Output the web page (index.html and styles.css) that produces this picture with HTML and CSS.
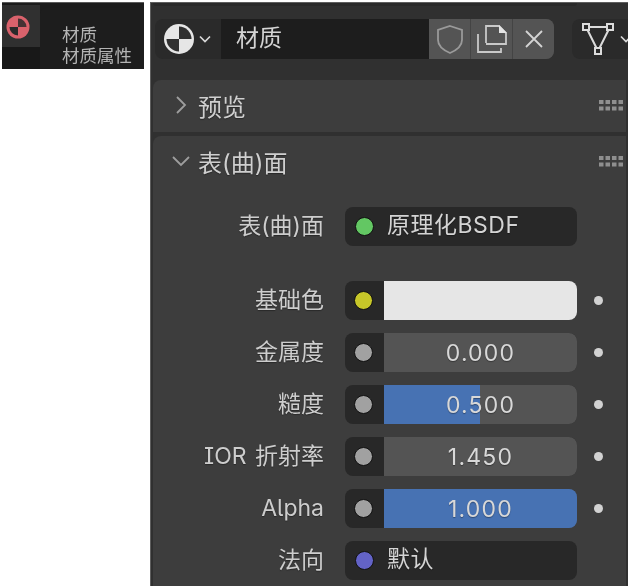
FILE: index.html
```html
<!DOCTYPE html>
<html lang="zh">
<head>
<meta charset="utf-8">
<title>材质</title>
<link rel="stylesheet" href="styles.css">
</head>
<body>
<div class="page">
  <aside class="tip">
    <div class="tabs">
      <div class="tab">
        <svg class="tab-icon" viewBox="0 0 24 24"><circle cx="12" cy="12" r="11.500" fill="#d9626c"/><path d="M12 3.500a8.500 8.500 0 0 1 8.500 8.500H12z" fill="#2a2a2a" opacity=".85"/><path d="M12 12v8.500A8.500 8.500 0 0 1 3.500 12z" fill="#2a2a2a"/></svg>
      </div>
      <div class="tab-rest"></div>
    </div>
    <div class="tip-card">
      <div>材质</div>
      <div>材质属性</div>
    </div>
  </aside>
  <main class="panel">
    <div class="top-edge"></div>
    <div class="toolbar">
      <div class="mat-picker">
        <svg class="mat-icon" viewBox="0 0 32 32"><circle cx="16" cy="16" r="15" fill="#e6e6e6"/><path d="M16 3.500A12.500 12.500 0 0 1 28.500 16H16z" fill="#303030"/><path d="M16 16v12.500A12.500 12.500 0 0 1 3.500 16z" fill="#303030"/></svg>
        <svg class="chev-small" viewBox="0 0 14 10"><path d="M2 2.500l5 5 5-5" fill="none" stroke="#d8d8d8" stroke-width="1.700"/></svg>
      </div>
      <div class="mat-name">材质</div>
      <div class="btn-group">
        <div class="btn"><svg viewBox="0 0 30 32" width="30" height="32"><path d="M15 3l12 4v10c0 6-5 10-12 13C8 27 3 23 3 17V7z" fill="none" stroke="#9a9a9a" stroke-width="1.800"/></svg></div>
        <div class="btn"><svg viewBox="0 0 32 32" width="32" height="32"><path d="M10 20V3h13l7 7v11H10M2 11v18h23v-4" fill="none" stroke="#c9c9c9" stroke-width="1.800"/><path d="M23 2l8 8h-8z" fill="#e4e4e4"/></svg></div>
        <div class="btn"><svg viewBox="0 0 24 24" width="24" height="24"><path d="M4 4l16 16M20 4L4 20" fill="none" stroke="#d4d4d4" stroke-width="1.800"/></svg></div>
      </div>
      <div class="link-btn">
        <svg viewBox="0 0 36 36" width="36" height="36"><path d="M6 6h24M6 6l12 24M30 6L18 30" fill="none" stroke="#dcdcdc" stroke-width="2"/><path d="M3 3h6v6H3zM27 3h6v6h-6zM15 27h6v6h-6z" fill="#2a2a2a" stroke="#dcdcdc" stroke-width="2"/></svg>
        <svg class="chev-small" viewBox="0 0 14 10"><path d="M2 2.500l5 5 5-5" fill="none" stroke="#d8d8d8" stroke-width="1.700"/></svg>
      </div>
    </div>

    <section class="section head-only">
      <svg class="chev-big" viewBox="0 0 20 20"><path d="M6 2l8 8-8 8" fill="none" stroke="#9e9e9e" stroke-width="1.800"/></svg>
      <span class="section-title">预览</span>
      <svg class="grip" viewBox="0 0 25 11"><path d="M0 0h4.500v4H0zM6.500 0h4.500v4H6.500zM13 0h4.500v4H13zM19.500 0H24v4h-4.500zM0 6.500h4.500v4H0zM6.500 6.500h4.500v4H6.500zM13 6.500h4.500v4H13zM19.500 6.500H24v4h-4.500z" fill="#8f8f8f"/></svg>
    </section>

    <section class="section body">
      <div class="section-head">
        <svg class="chev-big" viewBox="0 0 20 20"><path d="M2 6l8 8 8-8" fill="none" stroke="#9e9e9e" stroke-width="1.800"/></svg>
        <span class="section-title">表(曲)面</span>
        <svg class="grip" viewBox="0 0 25 11"><path d="M0 0h4.500v4H0zM6.500 0h4.500v4H6.500zM13 0h4.500v4H13zM19.500 0H24v4h-4.500zM0 6.500h4.500v4H0zM6.500 6.500h4.500v4H6.500zM13 6.500h4.500v4H13zM19.500 6.500H24v4h-4.500z" fill="#8f8f8f"/></svg>
      </div>

      <div class="row surface">
        <label>表(曲)面</label>
        <div class="field dark"><i class="sock green"></i><span class="field-text">原理化BSDF</span></div>
      </div>
      <div class="row">
        <label>基础色</label>
        <div class="field"><span class="sock-cell"><i class="sock yellow"></i></span><span class="swatch"></span></div>
        <i class="dot"></i>
      </div>
      <div class="row">
        <label>金属度</label>
        <div class="field"><span class="sock-cell"><i class="sock grey"></i></span><span class="slider"><span class="value">0.000</span></span></div>
        <i class="dot"></i>
      </div>
      <div class="row">
        <label>糙度</label>
        <div class="field"><span class="sock-cell"><i class="sock grey"></i></span><span class="slider"><span class="fill" style="width:49.500%"></span><span class="value">0.500</span></span></div>
        <i class="dot"></i>
      </div>
      <div class="row">
        <label>IOR 折射率</label>
        <div class="field"><span class="sock-cell"><i class="sock grey"></i></span><span class="slider"><span class="value">1.450</span></span></div>
        <i class="dot"></i>
      </div>
      <div class="row">
        <label>Alpha</label>
        <div class="field"><span class="sock-cell"><i class="sock grey"></i></span><span class="slider"><span class="fill" style="width:100%"></span><span class="value">1.000</span></span></div>
        <i class="dot"></i>
      </div>
      <div class="row">
        <label>法向</label>
        <div class="field dark"><i class="sock violet"></i><span class="field-text">默认</span></div>
      </div>
    </section>
  </main>
</div>
</body>
</html>
```
FILE: styles.css
```css
* { box-sizing: border-box; }
html, body { margin: 0; background: #fff; }
body {
  width: 628px;
  height: 588px;
  overflow: hidden;
  font-family: Inter, "Noto Sans CJK SC", sans-serif;
  font-feature-settings: "ss02";
  color: #d6d6d6;
}
.page {
  display: flex;
  align-items: flex-start;
  gap: 6px;
  padding: 2px 0 0 2px;
  filter: blur(0.5px);
}

/* tooltip crop */
.tip {
  width: 142px;
  height: 67px;
  flex: none;
  display: flex;
  background: #1c1c1c;
  border-top: 1px solid #5a5a5a;
  overflow: hidden;
}
.tabs { width: 38px; flex: none; display: flex; flex-direction: column; }
.tab {
  height: 42px;
  margin-top: 2px;
  background: #303030;
  display: flex;
  align-items: flex-start;
  padding: 10px 0 0 4px;
}
.tab-icon { width: 24px; height: 24px; }
.tab-rest { flex: 1; background: #181818; }
.tip-card {
  flex: 1;
  margin-top: 5px;
  background: #1d1d1d;
  border-radius: 6px 0 0 0;
  padding: 16px 0 0 22px;
  font-size: 17.500px;
  line-height: 21px;
  color: #b4b4b4;
}

/* properties panel */
.panel {
  width: 478px;
  height: 584px;
  flex: none;
  background: #303030;
  padding: 0 2px 0 2px;
  overflow: hidden;
  border-left: 1px solid #5e5e5e;
  border-top: 1px solid #5e5e5e;
}
.top-edge {
  height: 3px;
  width: 424px;
  background: #2a2a2a;
  border-radius: 0 0 6px 6px;
}
.toolbar {
  display: flex;
  align-items: stretch;
  height: 40px;
  margin-top: 13px;
  padding-left: 2px;
}
.mat-picker {
  width: 66px;
  flex: none;
  background: #2a2a2a;
  border-radius: 8px 0 0 8px;
  display: flex;
  align-items: center;
  padding-left: 8px;
  gap: 3px;
}
.mat-icon { width: 32px; height: 32px; }
.chev-small { width: 14px; height: 10px; }
.mat-name {
  width: 208px;
  flex: none;
  background: #1d1d1d;
  padding-left: 15px;
  font-size: 23px;
  line-height: 38px;
  color: #d4d4d4;
}
.btn-group {
  width: 125px;
  flex: none;
  display: flex;
  border-radius: 0 8px 8px 0;
  overflow: hidden;
  gap: 1px;
  background: #444;
}
.btn {
  flex: 1;
  background: #545454;
  display: flex;
  align-items: center;
  justify-content: center;
}
.link-btn {
  flex: none;
  width: 70px;
  margin-left: 18px;
  background: #2a2a2a;
  border-radius: 8px 0 0 8px;
  display: flex;
  align-items: center;
  padding-left: 8px;
  gap: 3px;
}

.section {
  background: #3d3d3d;
  border-radius: 8px 0 0 0;
}
.head-only {
  height: 52px;
  margin-top: 21px;
  display: flex;
  align-items: center;
  padding: 0 0 2px 18px;
}
.body {
  margin-top: 4px;
  padding-bottom: 10px;
}
.section-head {
  height: 52px;
  display: flex;
  align-items: center;
  padding: 0 0 2px 18px;
}
.chev-big { width: 20px; height: 20px; flex: none; }
.section-title {
  margin-left: 7px;
  font-size: 24px;
  color: #cfcfcf;
  text-shadow: 0 1px 1px rgba(0, 0, 0, .35);
}
.grip {
  width: 25px;
  height: 11px;
  flex: none;
  margin-left: auto;
  margin-right: 2px;
}

.row {
  display: flex;
  align-items: center;
  height: 39px;
  margin-top: 13px;
}
.surface { margin-top: 19px; margin-bottom: 35px; }
.row.surface + .row { margin-top: 0; }
.row label {
  width: 171px;
  flex: none;
  text-align: right;
  font-size: 23px;
  word-spacing: 2px;
  color: #cdcdcd;
  white-space: nowrap;
  line-height: 39px;
  text-shadow: 0 1px 1px rgba(0, 0, 0, .35);
}
.field {
  width: 232px;
  height: 39px;
  margin-left: 21px;
  flex: none;
  display: flex;
  border-radius: 8px;
  overflow: hidden;
  background: #282828;
}
.field.dark { align-items: center; padding-left: 10px; }
.field-text {
  margin-left: 13px;
  font-size: 23px;
  letter-spacing: .5px;
  line-height: 37px;
  height: 39px;
  color: #d4d4d4;
  text-shadow: 0 1px 1px rgba(0, 0, 0, .35);
}
.sock-cell {
  width: 39px;
  flex: none;
  display: flex;
  align-items: center;
  justify-content: center;
  padding-right: 2px;
}
.sock {
  display: block;
  width: 19px;
  height: 19px;
  flex: none;
  border-radius: 50%;
  border: 1.500px solid #111;
}
.green { background: #63c763; }
.yellow { background: #c7c729; }
.grey { background: #a1a1a1; }
.violet { background: #6363c7; }
.swatch { flex: 1; background: #e6e6e6; }
.slider {
  flex: 1;
  position: relative;
  background: #545454;
  display: flex;
  align-items: center;
  justify-content: center;
}
.fill {
  position: absolute;
  left: 0;
  top: 0;
  bottom: 0;
  background: #4772b3;
}
.value {
  position: relative;
  font-size: 23px;
  font-feature-settings: normal;
  letter-spacing: 1.200px;
  color: #d8d8d8;
  text-shadow: 0 1px 1px rgba(0, 0, 0, .35);
}
.dot {
  display: block;
  width: 9px;
  height: 9px;
  margin-left: 17px;
  border-radius: 50%;
  background: #d2d2d2;
  flex: none;
}
```
